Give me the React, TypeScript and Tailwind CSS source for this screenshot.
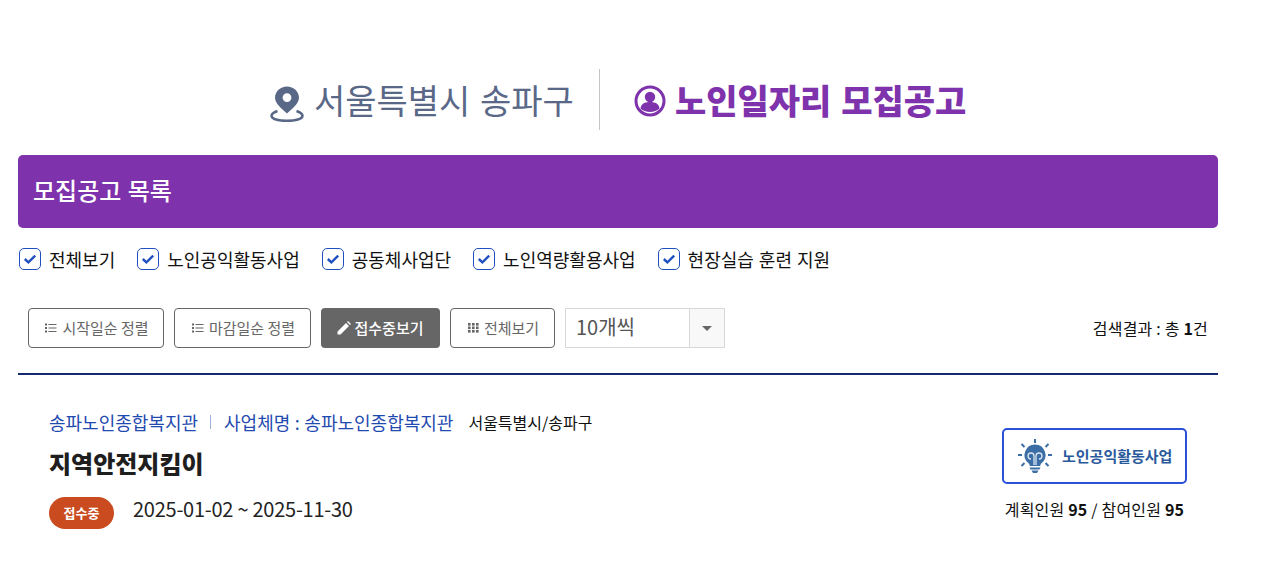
const filters = ["전체보기", "노인공익활동사업", "공동체사업단", "노인역량활용사업", "현장실습 훈련 지원"];

function CheckBox() {
  return (
    <span className="flex h-[22px] w-[22px] items-center justify-center rounded-[5px] border border-[#2050c0] bg-white">
      <svg width="14" height="12" viewBox="0 0 14 12" fill="none">
        <path d="M1.800 6 5.400 9.300l6.800-6.600" stroke="#2050c0" strokeWidth="2.400" />
      </svg>
    </span>
  );
}

function ListIcon() {
  return (
    <svg width="12" height="10" viewBox="0 0 12 10" fill="#666">
      <rect x="0" y="0.5" width="2" height="2" />
      <rect x="0" y="4" width="2" height="2" />
      <rect x="0" y="7.5" width="2" height="2" />
      <rect x="3.500" y="1" width="8" height="1" />
      <rect x="3.500" y="4.500" width="8" height="1" />
      <rect x="3.500" y="8" width="8" height="1" />
    </svg>
  );
}

function GridIcon() {
  return (
    <svg width="11" height="10" viewBox="0 0 11 10" fill="#666">
      {[0, 4, 8].map((x) =>
        [0, 3.5, 7].map((y) => <rect key={`${x}-${y}`} x={x} y={y} width="2.6" height="2.6" />)
      )}
    </svg>
  );
}

function BulbIcon() {
  return (
    <svg width="36" height="36" viewBox="0 0 36 36" fill="none">
      <g stroke="#3a6ea5" strokeWidth="2">
        <path d="M18 1v4M4.500 6l3 3M31.500 6l-3 3M1 17h4M31 17h4M7.500 25l-3 3M28.500 25l3 3" />
      </g>
      <path d="M18 6.500a10.500 10.500 0 0 0-6.500 18.700c.9.800 1.200 1.500 1.200 2.800h10.600c0-1.300.3-2 1.200-2.800A10.500 10.500 0 0 0 18 6.500Z" fill="#3a6ea5" />
      <path d="M12.500 29.500h11l-1 2h-9ZM14.500 32.500h7l-1.500 2.500h-4Z" fill="#3a6ea5" />
      <path d="M17 27v-9a3 3 0 1 0-3 3M19 27v-9a3 3 0 1 1 3 3" stroke="#dce6f2" strokeWidth="1.300" />
    </svg>
  );
}

export default function App() {
  return (
    <div className="h-[564px] w-[1286px] overflow-hidden bg-white font-['Noto_Sans_CJK_KR','Noto_Sans',sans-serif]">
      <div className="w-[1236px] pl-[18px] pt-[69px]">
        <div className="w-[1200px]">
          {/* 지역 / 제목 */}
          <div className="flex h-[61px] items-center pl-[252px]">
            <div className="flex w-[329px] items-center gap-[10px]">
              <svg className="mt-[8px]" width="34" height="36" viewBox="0 0 34 36" fill="none">
                <path d="M17 .5C10.200.5 5 5.600 5 11.800 5 18.200 13 23.500 17 27.500 21 23.500 29 18.200 29 11.800 29 5.600 23.800.5 17 .5Zm0 15.500a4.400 4.400 0 1 1 0-8.800 4.400 4.400 0 0 1 0 8.800Z" fill="#5a6888" />
                <path d="M7.500 25C3.700 26.300 1.500 27.800 1.500 29.800c0 3.200 7 5 15.500 5s15.500-1.800 15.500-5c0-2-2.200-3.500-6-4.800" stroke="#5a6888" strokeWidth="2.600" />
              </svg>
              <span className="whitespace-nowrap text-[34px] leading-none text-[#5a6888] [word-spacing:2px]">서울특별시 송파구</span>
            </div>
            <div className="h-[61px] w-px bg-[#c4c4c4]" />
            <div className="ml-[34px] flex items-center gap-[9px]">
              <svg className="mt-[2px]" width="32" height="32" viewBox="0 0 32 32" fill="none">
                <circle cx="16" cy="16" r="14" stroke="#7e33ac" strokeWidth="3" />
                <circle cx="16" cy="12" r="5.200" fill="#7e33ac" />
                <path d="M6.500 23.500c.5-4.500 4-6.500 9.500-6.500s9 2 9.500 6.500c-2.300 2.300-5.700 3.500-9.500 3.500s-7.200-1.200-9.500-3.500Z" fill="#7e33ac" />
              </svg>
              <span className="whitespace-nowrap text-[34px] font-black leading-none text-[#7e33ac] [word-spacing:2px]">노인일자리 모집공고</span>
            </div>
          </div>

          {/* 목록 헤더 */}
          <div className="mt-[25px] flex h-[73px] items-center rounded-[5px] bg-[#7e33ac] pb-[3px] pl-[15px] text-[24px] font-medium text-white [word-spacing:1px]">
            모집공고 목록
          </div>

          {/* 필터 */}
          <div className="mt-[20px] flex h-[22px] items-center pl-px">
            {filters.map((label) => (
              <label key={label} className="mr-[22px] flex items-center gap-2 text-[18px] leading-none text-[#111] [word-spacing:1px]">
                <CheckBox />
                <span className="whitespace-nowrap">{label}</span>
              </label>
            ))}
          </div>

          {/* 정렬 */}
          <div className="mt-[38px] flex h-[40px] items-center pl-[10px] pr-[10px]">
            <button className="flex h-[40px] w-[136px] items-center justify-center gap-[5px] rounded-[4px] border border-[#666] pl-[2px] text-[15px] text-[#666]">
              <ListIcon />
              시작일순 정렬
            </button>
            <button className="ml-[10px] flex h-[40px] w-[137px] items-center justify-center gap-[5px] rounded-[4px] border border-[#666] pl-[2px] text-[15px] text-[#666]">
              <ListIcon />
              마감일순 정렬
            </button>
            <button className="ml-[10px] flex h-[40px] w-[119px] items-center justify-center gap-[3px] rounded-[4px] bg-[#666] text-[15px] font-medium text-white">
              <svg width="14" height="14" viewBox="0 0 14 14" fill="#fff">
                <path d="M0.500 13.500v-3L9 2l3 3-8.500 8.500ZM10 1l1-1 3 3-1 1Z" />
              </svg>
              접수중보기
            </button>
            <button className="ml-[10px] flex h-[40px] w-[105px] items-center justify-center gap-[5px] rounded-[4px] border border-[#666] pl-[2px] text-[15px] text-[#666]">
              <GridIcon />
              전체보기
            </button>
            <div className="ml-[10px] flex h-[40px] w-[160px] border border-[#d8d8d8]">
              <span className="flex flex-1 items-center pb-[2px] pl-[10px] text-[20px] text-[#555]">10개씩</span>
              <span className="flex w-[35px] items-center justify-center border-l border-[#d8d8d8] bg-[#f8f8f8]">
                <span className="h-0 w-0 border-x-[5px] border-t-[5px] border-x-transparent border-t-[#666]" />
              </span>
            </div>
            <p className="ml-auto text-[16px] tracking-[0.2px] text-[#111]">
              검색결과 : 총 <b className="font-bold">1</b>건
            </p>
          </div>

          <div className="mt-[25px] h-[2px] bg-[#15296f]" />

          {/* 공고 */}
          <div className="flex items-start justify-between pl-[31px] pr-[31px] pt-[35px]">
            <div>
              <div className="flex h-[24px] items-center text-[18px] text-[#1f4ab0]">
                <span>송파노인종합복지관</span>
                <span className="ml-[12px] mr-[13px] h-[14px] w-px bg-[#9db2dc]" />
                <span className="[word-spacing:0.5px]">사업체명 : 송파노인종합복지관</span>
                <span className="ml-[15px] text-[16px] text-[#111]">서울특별시/송파구</span>
              </div>
              <h2 className="mt-[14px] text-[24px] font-black leading-[30px] text-[#1e1e1e]">지역안전지킴이</h2>
              <div className="mt-[19px] flex items-start gap-[19px]">
                <span className="flex h-[32px] w-[65px] items-center justify-center rounded-full bg-[#c94b1f] text-[13px] font-bold text-white">접수중</span>
                <span className="text-[20px] leading-[24px] tracking-[-0.25px] text-[#222]">2025-01-02 ~ 2025-11-30</span>
              </div>
            </div>
            <div className="flex w-[185px] flex-col items-center pt-[18px]">
              <div className="flex h-[56px] w-[185px] items-center gap-[9px] rounded-[5px] border-2 border-[#2a52d8] pl-[13px]">
                <BulbIcon />
                <span className="whitespace-nowrap text-[15px] font-bold text-[#2a5a9c]">노인공익활동사업</span>
              </div>
              <p className="mt-[13px] whitespace-nowrap text-[16px] tracking-[0.2px] text-[#111]">
                계획인원 <b className="font-bold">95</b> / 참여인원 <b className="font-bold">95</b>
              </p>
            </div>
          </div>
        </div>
      </div>
    </div>
  );
}
